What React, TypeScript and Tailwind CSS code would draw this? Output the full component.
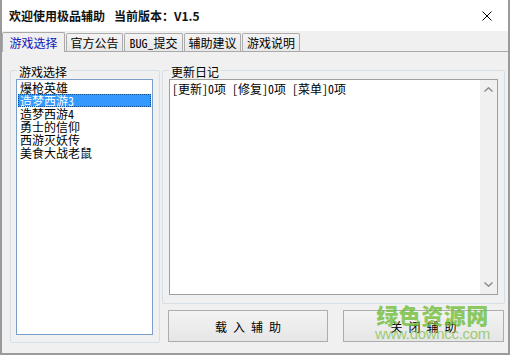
import { useState } from 'react'

const TABS = ['游戏选择', '官方公告', 'BUG_提交', '辅助建议', '游戏说明']

const GAMES = ['爆枪英雄', '造梦西游3', '造梦西游4', '勇士的信仰', '西游灭妖传', '美食大战老鼠']

export default function App() {
    const [tab] = useState(0)
    const [game, setGame] = useState(1)

    return (
        <div className="relative w-[510px] h-[355px] flex flex-col bg-[#f0f0f0] border-l-2 border-r-2 border-b-2 border-[#9a9a9a] overflow-hidden font-['Noto_Sans_Mono_CJK_SC','Noto_Sans_CJK_SC',monospace] text-[12px] leading-[13px] text-black">
            {/* 标题栏 */}
            <div className="h-[31px] flex items-center bg-white pl-[7px] pr-[16px] shrink-0">
                <span className="font-['Noto_Sans_CJK_SC',sans-serif] font-bold text-[12px] text-[#111]">欢迎使用极品辅助</span>
                <span className="ml-[9px] font-['Noto_Sans_CJK_SC',sans-serif] font-bold text-[12px] text-[#111]">当前版本：V1.5</span>
                <svg className="ml-auto w-[10px] h-[10px]" viewBox="0 0 10 10">
                    <path d="M0.5 0.5 L9.5 9.5 M9.5 0.5 L0.5 9.5" stroke="#000" strokeWidth="1" fill="none" />
                </svg>
            </div>

            {/* 选项卡 */}
            <div className="h-[21px] flex items-end gap-px border-b border-[#a9a9a9] shrink-0">
                {TABS.map((t, i) =>
                    i === tab ? (
                        <div key={t} className="h-[20px] -mb-px w-[63px] flex items-center justify-center bg-[#f0f0f0] border border-b-0 border-[#a9a9a9] rounded-t-[2px] text-[#1414b8]">
                            {t}
                        </div>
                    ) : (
                        <div key={t} className={`h-[18px] flex items-center justify-center bg-gradient-to-b from-[#f4f4f4] to-[#e8e8e8] border border-b-0 border-[#acacac] rounded-t-[2px] ${i === 2 ? 'w-[59px]' : i === 4 ? 'w-[58px]' : 'w-[57px]'}`}>
                            {t}
                        </div>
                    )
                )}
            </div>

            {/* 内容 */}
            <div className="flex-1 flex items-start gap-[2px] pl-[8px] pt-[18px]">
                {/* 游戏选择 */}
                <div className="relative w-[150px] h-[273px] border border-[#d5dfe5] rounded-[2px] pl-[5px] pr-[6px] pt-[8px]">
                    <span className="absolute left-[6px] -top-[6px] px-[2px] bg-[#f0f0f0]">游戏选择</span>
                    <div className="w-[137px] h-[256px] bg-white border border-[#7a9fc9] pt-px">
                        {GAMES.map((g, i) => (
                            <div
                                key={g}
                                onClick={() => setGame(i)}
                                className={`h-[13px] pl-[2px] mx-px whitespace-nowrap ${i === game ? 'bg-[#3399ff] text-white outline outline-1 outline-dotted outline-[#0c4f95] -outline-offset-1' : ''}`}
                            >
                                {g}
                            </div>
                        ))}
                    </div>
                </div>

                <div className="flex flex-col">
                    {/* 更新日记 */}
                    <div className="relative w-[343px] h-[234px] border border-[#d5dfe5] rounded-[2px] px-[6px] pt-[8px]">
                        <span className="absolute left-[6px] -top-[6px] px-[2px] bg-[#f0f0f0]">更新日记</span>
                        <div className="w-[329px] h-[216px] bg-white border border-[#a0a0a0] flex">
                            <div className="flex-1 pl-[2px] pt-[2px] whitespace-pre">[更新]0项 [修复]0项 [菜单]0项</div>
                            <div className="w-[17px] bg-[#f0f0f0] flex flex-col items-center justify-between py-[7px]">
                                <svg className="w-[9px] h-[5px]" viewBox="0 0 9 5">
                                    <path d="M0.5 4.5 L4.5 0.8 L8.5 4.5" stroke="#888" strokeWidth="1.4" fill="none" />
                                </svg>
                                <svg className="w-[9px] h-[5px]" viewBox="0 0 9 5">
                                    <path d="M0.5 0.5 L4.5 4.2 L8.5 0.5" stroke="#888" strokeWidth="1.4" fill="none" />
                                </svg>
                            </div>
                        </div>
                    </div>

                    {/* 按钮 */}
                    <div className="flex gap-[15px] mt-[6px] pl-[6px]">
                        <button className="w-[160px] h-[32px] flex items-center justify-center border border-[#adadad] bg-gradient-to-b from-[#f3f3f3] to-[#e6e6e6] whitespace-pre">
                            载 入 辅 助
                        </button>
                        <button className="w-[161px] h-[32px] flex items-center justify-center border border-[#adadad] bg-gradient-to-b from-[#f3f3f3] to-[#e6e6e6] whitespace-pre">
                            关 闭 辅 助
                        </button>
                    </div>
                </div>
            </div>

            {/* 水印 */}
            <div className="absolute left-[373px] top-[302px] flex flex-col items-center pointer-events-none">
                <span className="font-['Noto_Sans_CJK_SC',sans-serif] font-black text-[22px] leading-[24px] text-[#6fbd36]/80 tracking-[0.5px]">绿色资源网</span>
                <span className="font-['Liberation_Sans',sans-serif] text-[15px] leading-[15px] text-[#7fc04e]/75 tracking-[-0.3px]">www.downcc.com</span>
            </div>
        </div>
    )
}
